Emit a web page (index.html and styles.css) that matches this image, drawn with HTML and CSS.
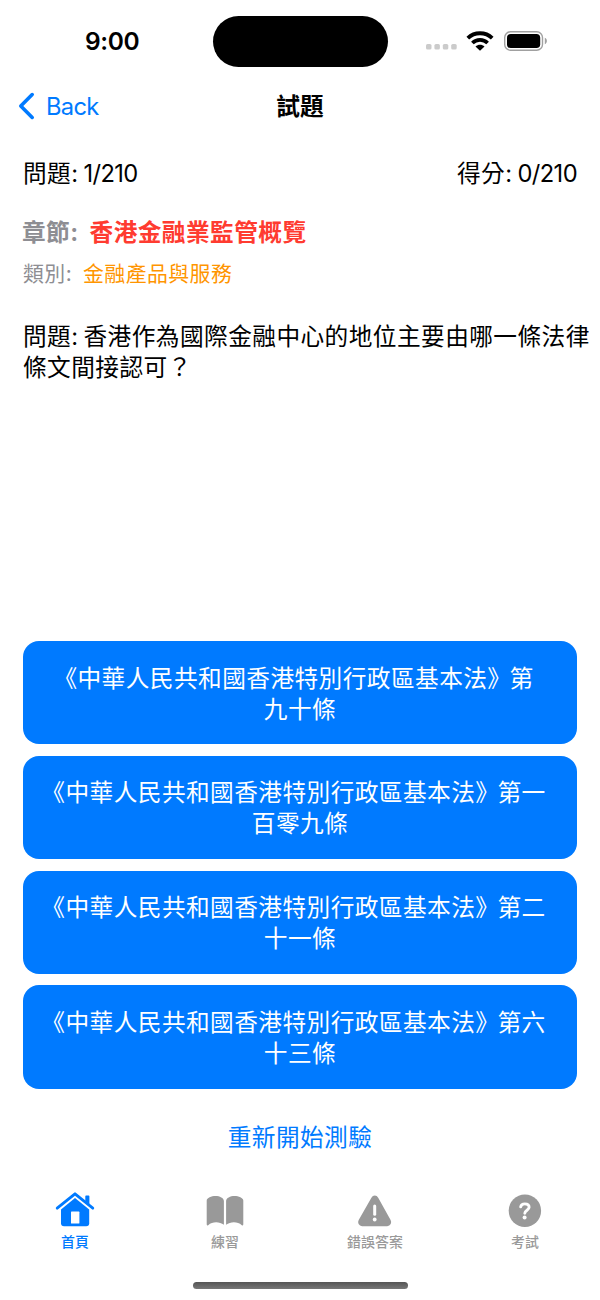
FILE: index.html
```html
<!DOCTYPE html>
<html lang="zh-Hant">
<head>
    <meta charset="UTF-8">
    <meta name="viewport" content="width=device-width, initial-scale=1.0">
    <title>試題</title>
    <link rel="stylesheet" href="styles.css">
</head>
<body>
    <div class="status-bar">
        <div class="time">9:00</div>
        <div class="island"></div>
        <div class="status-icons">
            <svg class="signal" width="31" height="6" viewBox="0 0 31 6" fill="#cbcbcb">
                <rect x="0" y="0" width="5.5" height="5.5" rx="1.6"/>
                <rect x="8.4" y="0" width="5.5" height="5.5" rx="1.6"/>
                <rect x="16.8" y="0" width="5.5" height="5.5" rx="1.6"/>
                <rect x="25.2" y="0" width="5.5" height="5.5" rx="1.6"/>
            </svg>
            <svg class="wifi" width="28" height="20" viewBox="0 0 28 20">
                <path d="M1.8 7.2C8.5 .6 19.5 .6 26.2 7.2" fill="none" stroke="#000" stroke-width="3.8"/>
                <path d="M6.4 12C10.6 7.8 17.4 7.8 21.6 12" fill="none" stroke="#000" stroke-width="3.7"/>
                <path d="M9.5 15.4C12 13.2 16 13.2 18.5 15.4L14 19.7Z"/>
            </svg>
            <svg class="battery" width="44" height="20" viewBox="0 0 44 20">
                <rect x=".7" y=".7" width="37.8" height="18.6" rx="5.8" fill="none" stroke="#a0a0a0" stroke-width="1.4"/>
                <rect x="3" y="3" width="33.2" height="14" rx="3.8"/>
                <path d="M40.8 6.8C43.6 7.8 43.6 12.2 40.8 13.2Z" fill="#a0a0a0"/>
            </svg>
        </div>
    </div>

    <header class="nav-bar">
        <a class="back" href="#">
            <svg width="17" height="28" viewBox="0 0 17 28">
                <path d="M14.2 2.6L2.8 14L14.2 25.4" fill="none" stroke="currentColor" stroke-width="3.6" stroke-linecap="round" stroke-linejoin="round"/>
            </svg>
            <span>Back</span>
        </a>
        <h1>試題</h1>
    </header>

    <main>
        <div class="stats">
            <div>問題<span class="latin">: 1/210</span></div>
            <div>得分<span class="latin">: 0/210</span></div>
        </div>

        <div class="chapter">章節<span class="latin">:</span><span class="chapter-name">香港金融業監管概覽</span></div>
        <div class="category">類別<span class="latin">:</span><span class="category-name">金融產品與服務</span></div>

        <p class="question">問題<span class="latin">: </span>香港作為國際金融中心的地位主要由哪一條法律<br>條文間接認可？</p>

        <div class="answers">
            <button class="answer"><span class="open">《</span>中華人民共和國香港特別行政區基本法<span class="close">》</span>第<br>九十條</button>
            <button class="answer"><span class="open">《</span>中華人民共和國香港特別行政區基本法<span class="close">》</span>第一<br>百零九條</button>
            <button class="answer"><span class="open">《</span>中華人民共和國香港特別行政區基本法<span class="close">》</span>第二<br>十一條</button>
            <button class="answer"><span class="open">《</span>中華人民共和國香港特別行政區基本法<span class="close">》</span>第六<br>十三條</button>
        </div>

        <button class="restart">重新開始測驗</button>
    </main>

    <nav class="tab-bar">
        <a class="tab active" href="#">
            <svg width="40" height="36" viewBox="0 0 40 36">
                <path d="M2.2 17.2L20 2.8L37.8 17.2" fill="none" stroke="currentColor" stroke-width="2.8" stroke-linecap="round" stroke-linejoin="round"/>
                <path d="M30.3 10V5.4Q30.3 4.6 31.1 4.6H33.6Q34.4 4.6 34.4 5.4V13.4Z" fill="currentColor"/>
                <path d="M20 7L34.2 18.5V32.2Q34.2 35.2 31.2 35.2H9Q6 35.2 6 32.2V18.5Z" fill="currentColor"/>
                <rect x="16" y="20.6" width="8.4" height="12" rx=".6" fill="#fff"/>
            </svg>
            <span>首頁</span>
        </a>
        <a class="tab" href="#">
            <svg width="40" height="36" viewBox="0 0 40 36" fill="currentColor">
                <path d="M1.7 9.5C1.7 6.8 6.5 5 10.5 5C14.7 5 18.9 7 18.9 10V33.8C14.5 30.5 7.5 30.3 3.2 34.2Q1.7 34.9 1.7 33.3Z"/>
                <path d="M38.3 9.5C38.3 6.8 33.5 5 29.5 5C25.3 5 21.1 7 21.1 10V33.8C25.5 30.5 32.5 30.3 36.8 34.2Q38.3 34.9 38.3 33.3Z"/>
            </svg>
            <span>練習</span>
        </a>
        <a class="tab" href="#">
            <svg width="40" height="36" viewBox="0 0 40 36">
                <path d="M16.4 6.7Q17.6 4.6 19.8 4.6Q22 4.6 23.2 6.7L35.6 28.9Q36.8 31.1 35.7 33.1Q34.6 35.2 32.2 35.2H7.1Q4.7 35.2 3.6 33.1Q2.5 31.1 3.7 28.9Z" fill="currentColor"/>
                <path d="M19.7 14.9V23.3" stroke="#fff" stroke-width="3" stroke-linecap="round"/>
                <circle cx="19.7" cy="28.5" r="1.9" fill="#fff"/>
            </svg>
            <span>錯誤答案</span>
        </a>
        <a class="tab" href="#">
            <svg width="40" height="36" viewBox="0 0 40 36">
                <circle cx="19.9" cy="19.8" r="16.2" fill="currentColor"/>
                <path d="M15.7 15.8C16.1 13.9 17.6 12.9 19.8 12.9C22.3 12.9 24.1 14.2 24.1 16.3C24.1 19.2 19.8 19.2 19.8 22.3" fill="none" stroke="#fff" stroke-width="2.9" stroke-linecap="round"/>
                <circle cx="19.6" cy="26.6" r="2" fill="#fff"/>
            </svg>
            <span>考試</span>
        </a>
    </nav>
    <div class="home-indicator"></div>
</body>
</html>
```
FILE: styles.css
```css
* {
    box-sizing: border-box;
}

body {
    display: flex;
    flex-direction: column;
    width: 600px;
    height: 1300px;
    margin: 0;
    background: #fff;
    color: #000;
    font-family: 'Noto Sans CJK TC', sans-serif;
    font-size: 23.7px;
    line-height: 31px;
    letter-spacing: 0.42px;
    overflow: hidden;
}

a {
    color: inherit;
    text-decoration: none;
}

button {
    border: none;
    background: none;
    padding: 0;
    font: inherit;
    letter-spacing: inherit;
    cursor: pointer;
}

svg {
    flex-shrink: 0;
}

.latin {
    font-family: 'Inter', sans-serif;
    line-height: 1;
    letter-spacing: -0.6px;
}

.status-bar {
    display: grid;
    grid-template-columns: 212px 176px 1fr;
    height: 82px;
    align-items: center;
}

.time {
    padding-left: 85px;
    font-family: 'Inter', sans-serif;
    font-size: 24.5px;
    font-weight: 600;
    letter-spacing: -0.4px;
}

.island {
    height: 51px;
    margin: 1px 0.5px 0;
    border-radius: 26px;
    background: #000;
}

.status-icons {
    display: flex;
    align-items: center;
    padding-left: 38px;
}

.signal {
    margin: 12px 9px 0 0;
}

.wifi {
    margin-right: 10px;
}

.nav-bar {
    display: grid;
    grid-template-columns: 1fr auto 1fr;
    align-items: center;
    height: 48px;
    padding: 0 18px;
}

.back {
    display: flex;
    align-items: center;
    gap: 11px;
    color: #007aff;
    font-family: 'Inter', sans-serif;
    letter-spacing: -0.7px;
}

h1 {
    margin: -2px 0 0;
    font-size: 23.7px;
    font-weight: bold;
    letter-spacing: 0;
}

main {
    display: flex;
    flex-direction: column;
    padding: 27px 23px 0;
}

.stats {
    display: flex;
    justify-content: space-between;
    height: 31px;
}

.chapter {
    height: 31px;
    margin: 28px 0 0 -1px;
    color: #8e8e93;
    font-weight: bold;
}

.chapter-name {
    margin-left: 12px;
    color: #ff3b30;
}

.category {
    height: 28px;
    margin-top: 11px;
    color: #8e8e93;
    font-size: 20.9px;
    line-height: 28px;
}

.category-name {
    margin-left: 12px;
    color: #ff9500;
}

.question {
    height: 321px;
    margin: 34px -20px 0 0;
    white-space: nowrap;
}

.answers {
    display: flex;
    flex-direction: column;
    gap: 11.6px;
}

.answer {
    height: 103.2px;
    border-radius: 16px;
    background: #007aff;
    color: #fff;
    white-space: nowrap;
}

.open {
    margin-left: -13px;
}

.close {
    margin-right: -2px;
}

.restart {
    align-self: center;
    margin-top: 32px;
    color: #007aff;
}

.tab-bar {
    display: grid;
    grid-template-columns: repeat(4, 1fr);
    margin-top: 39px;
}

.tab {
    display: flex;
    flex-direction: column;
    align-items: center;
    gap: 4px;
    color: #999;
    font-size: 13.9px;
    font-weight: 500;
    line-height: 20px;
    letter-spacing: 0.1px;
}

.tab.active {
    color: #007aff;
}

.home-indicator {
    width: 215px;
    height: 7.5px;
    margin: 31px auto 0;
    border-radius: 4px;
    background: linear-gradient(#555, #777);
}
```
